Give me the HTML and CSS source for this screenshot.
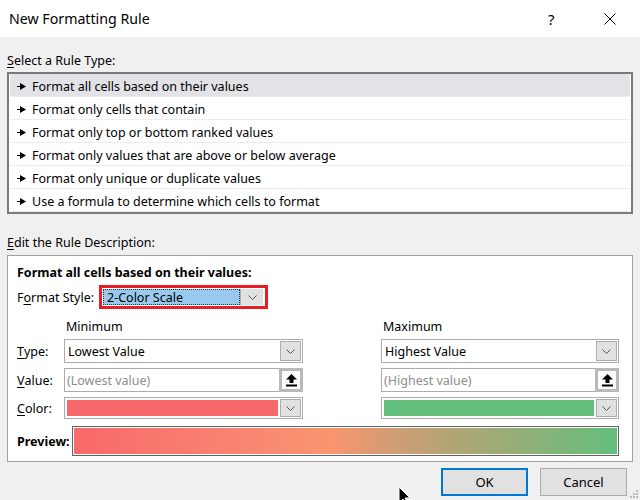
FILE: index.html
```html
<!DOCTYPE html>
<html>
<head>
<meta charset="utf-8">
<link rel="stylesheet" href="styles.css">
</head>
<body>
<div class="titlebar">
  <div class="title">New Formatting Rule</div>
  <div class="help">?</div>
  <svg class="close" width="12" height="12" viewBox="0 0 12 12"><path d="M0.5 0.5 L11.5 11.5 M11.5 0.5 L0.5 11.5" stroke="#000" stroke-width="1" fill="none"/></svg>
</div>
<div class="content">
  <div class="section-label label-top"><u>S</u>elect a Rule Type:</div>
  <div class="listbox">
    <div class="row selected"><svg class="pointer" width="9" height="7" viewBox="0 0 9 7"><path d="M0 3h4v1H0z M3 0 L9 3.5 L3 7z" fill="#000"/></svg>Format all cells based on their values</div>
    <div class="row"><svg class="pointer" width="9" height="7" viewBox="0 0 9 7"><path d="M0 3h4v1H0z M3 0 L9 3.5 L3 7z" fill="#000"/></svg>Format only cells that contain</div>
    <div class="row"><svg class="pointer" width="9" height="7" viewBox="0 0 9 7"><path d="M0 3h4v1H0z M3 0 L9 3.5 L3 7z" fill="#000"/></svg>Format only top or bottom ranked values</div>
    <div class="row"><svg class="pointer" width="9" height="7" viewBox="0 0 9 7"><path d="M0 3h4v1H0z M3 0 L9 3.5 L3 7z" fill="#000"/></svg>Format only values that are above or below average</div>
    <div class="row"><svg class="pointer" width="9" height="7" viewBox="0 0 9 7"><path d="M0 3h4v1H0z M3 0 L9 3.5 L3 7z" fill="#000"/></svg>Format only unique or duplicate values</div>
    <div class="row"><svg class="pointer" width="9" height="7" viewBox="0 0 9 7"><path d="M0 3h4v1H0z M3 0 L9 3.5 L3 7z" fill="#000"/></svg>Use a formula to determine which cells to format</div>
  </div>
  <div class="section-label label-edit"><u>E</u>dit the Rule Description:</div>
  <div class="desc">
    <div class="desc-title">Format all cells based on their values:</div>
    <div class="fs-row">
      <div class="fs-label">F<u>o</u>rmat Style:</div>
      <div class="fs-combo">
        <div class="fs-sel">2-Color Scale</div>
        <div class="fs-btn"><svg width="9" height="5" viewBox="0 0 9 5"><polyline points="0.5,0.5 4.5,4.5 8.5,0.5" fill="none" stroke="#555" stroke-width="1"/></svg></div>
      </div>
    </div>
    <div class="grid">
      <div></div>
      <div class="col-head">Minimum</div>
      <div></div>
      <div class="col-head">Maximum</div>

      <div class="lbl r1"><u>T</u>ype:</div>
      <div class="combo r1"><div class="combo-text">Lowest Value</div><div class="dd-btn"><svg width="9" height="5" viewBox="0 0 9 5"><polyline points="0.5,0.5 4.5,4.5 8.5,0.5" fill="none" stroke="#555" stroke-width="1"/></svg></div></div>
      <div class="r1"></div>
      <div class="combo r1"><div class="combo-text">Highest Value</div><div class="dd-btn"><svg width="9" height="5" viewBox="0 0 9 5"><polyline points="0.5,0.5 4.5,4.5 8.5,0.5" fill="none" stroke="#555" stroke-width="1"/></svg></div></div>

      <div class="lbl r2"><u>V</u>alue:</div>
      <div class="valfield r2"><div class="placeholder">(Lowest value)</div><div class="up-btn"><svg width="11" height="13" viewBox="0 0 11 13"><path d="M5.5 0 L11 5.5 H7.5 V9 H3.5 V5.5 H0 Z M0 10.5 H11 V12.5 H0 Z" fill="#000"/></svg></div></div>
      <div class="r2"></div>
      <div class="valfield r2"><div class="placeholder">(Highest value)</div><div class="up-btn"><svg width="11" height="13" viewBox="0 0 11 13"><path d="M5.5 0 L11 5.5 H7.5 V9 H3.5 V5.5 H0 Z M0 10.5 H11 V12.5 H0 Z" fill="#000"/></svg></div></div>

      <div class="lbl r3"><u>C</u>olor:</div>
      <div class="combo colorcombo r3"><div class="swatch swatch-red"></div><div class="dd-btn"><svg width="9" height="5" viewBox="0 0 9 5"><polyline points="0.5,0.5 4.5,4.5 8.5,0.5" fill="none" stroke="#555" stroke-width="1"/></svg></div></div>
      <div class="r3"></div>
      <div class="combo colorcombo r3"><div class="swatch swatch-green"></div><div class="dd-btn"><svg width="9" height="5" viewBox="0 0 9 5"><polyline points="0.5,0.5 4.5,4.5 8.5,0.5" fill="none" stroke="#555" stroke-width="1"/></svg></div></div>
    </div>
    <div class="preview-row">
      <div class="preview-label">Preview:</div>
      <div class="preview-bar"><div class="preview-fill"></div></div>
    </div>
  </div>
  <div class="footer">
    <div class="btn btn-ok">OK</div>
    <div class="btn">Cancel</div>
  </div>
</div>
<svg class="cursor" width="14" height="20" viewBox="0 0 14 20"><path d="M1 1 L1 17 L5 13 L8 19 L10 18 L7 12 L12 12 Z" fill="#000" stroke="#fff" stroke-width="1"/></svg>
<svg class="grip" width="8" height="8" viewBox="0 0 8 8"><rect x="6" y="0" width="2" height="2" fill="#bcbcbc"/><rect x="3" y="3" width="2" height="2" fill="#bcbcbc"/><rect x="6" y="3" width="2" height="2" fill="#bcbcbc"/><rect x="0" y="6" width="2" height="2" fill="#bcbcbc"/><rect x="3" y="6" width="2" height="2" fill="#bcbcbc"/><rect x="6" y="6" width="2" height="2" fill="#bcbcbc"/></svg>
</body>
</html>
```

FILE: styles.css
```css
* { box-sizing: border-box; }
html, body { margin: 0; padding: 0; }
body {
  width: 640px;
  height: 500px;
  overflow: hidden;
  position: relative;
  background: #f0f0f0;
  font-family: "Segoe UI", "Noto Sans", "Open Sans", sans-serif;
  font-size: 12.5px;
  color: #000;
}
u { text-decoration: underline; text-underline-offset: 2px; }

.titlebar {
  height: 37px;
  background: #fff;
  display: flex;
  align-items: center;
  padding-left: 9px;
  font-size: 14.2px;
}
.title { flex: 1; }
.help { width: 10px; margin-right: 46px; font-size: 15px; }
.close { margin-right: 24px; }

.content { padding: 0 7px; }
.section-label { height: 16px; line-height: 16px; }
.label-top { margin-top: 16px; margin-bottom: 3px; }
.label-edit { margin-top: 21px; margin-bottom: 4px; }

.listbox {
  border: 2px solid #7a7a7a;
  background: #fff;
  padding: 0 1px;
}
.row {
  height: 23px;
  border-bottom: 1px solid #ececec;
  display: flex;
  align-items: center;
  padding-left: 7px;
  padding-top: 3px;
  white-space: nowrap;
}
.row.selected { background: #e2e2e7; }
.pointer { margin-right: 6px; flex: none; margin-top: -1px; }

.desc {
  border: 1px solid #a0a0a0;
  background: #fff;
  padding: 9px 13px 5px 9px;
}
.desc-title { font-weight: bold; height: 16px; line-height: 16px; }
.fs-row { display: flex; align-items: center; margin-top: 4px; }
.fs-label { width: 82px; }
.fs-combo {
  width: 169px;
  height: 24px;
  border: 3px solid #ec1c24;
  display: flex;
  padding: 1px 2px 1px 1px;
}
.fs-sel {
  flex: 1;
  background: #99c9ef;
  outline: 1px dotted #333;
  outline-offset: -1px;
  line-height: 17px;
  padding-left: 4px;
}
.fs-btn {
  width: 23px;
  background: #e1e1e1;
  border-left: 1px solid #adadad;
  display: flex;
  align-items: center;
  justify-content: center;
}

.grid {
  display: grid;
  grid-template-columns: 47px 239px 78px 238px;
  grid-template-rows: 16px 28px 29px 27px;
  margin-top: 10px;
}
.col-head { padding-left: 2px; line-height: 16px; }
.lbl { display: flex; align-items: center; }
.r1 { margin-top: 4px; height: 24px; }
.r2 { margin-top: 5px; height: 24px; }
.r3 { margin-top: 5px; height: 22px; }

.combo {
  border: 1px solid #ababab;
  display: flex;
  align-items: stretch;
  padding: 1px;
  background: #fff;
}
.combo-text { flex: 1; display: flex; align-items: center; padding-left: 2px; }
.dd-btn {
  width: 21px;
  background: #e1e1e1;
  border: 1px solid #adadad;
  display: flex;
  align-items: center;
  justify-content: center;
}
.valfield {
  border: 1px solid #ababab;
  display: flex;
  background: #fff;
}
.placeholder { flex: 1; display: flex; align-items: center; padding-left: 2px; color: #8d8d8d; }
.up-btn {
  width: 24px;
  margin: -1px -1px -1px 0;
  border: 3px solid #b9b9b9;
  background: #fcfcfc;
  display: flex;
  align-items: center;
  justify-content: center;
}
.colorcombo { padding: 1px; }
.swatch { flex: 1; margin: 1px 2px 1px 1px; }
.swatch-red { background: #f8696b; }
.swatch-green { background: #63be7b; }

.preview-row { display: flex; align-items: center; margin-top: 7px; }
.preview-label { width: 55px; font-weight: bold; }
.preview-bar {
  width: 548px;
  height: 30px;
  border: 1px solid #646464;
  padding: 1px;
}
.preview-fill {
  height: 100%;
  background: linear-gradient(to right, #f8696b 0%, #f98471 30%, #f9956f 47%, #d49c73 58%, #b6a475 68%, #99ad77 80%, #63be7b 100%);
}

.footer {
  display: flex;
  justify-content: flex-end;
  gap: 12px;
  margin-top: 6px;
  margin-right: 6px;
}
.btn {
  width: 87px;
  height: 28px;
  background: #e1e1e1;
  border: 1px solid #adadad;
  display: flex;
  align-items: center;
  justify-content: center;
  font-size: 13px;
}
.btn-ok { border: 2px solid #0078d7; }

.cursor { position: absolute; left: 398px; top: 486px; }
.grip { position: absolute; right: 2px; bottom: 2px; }
```
